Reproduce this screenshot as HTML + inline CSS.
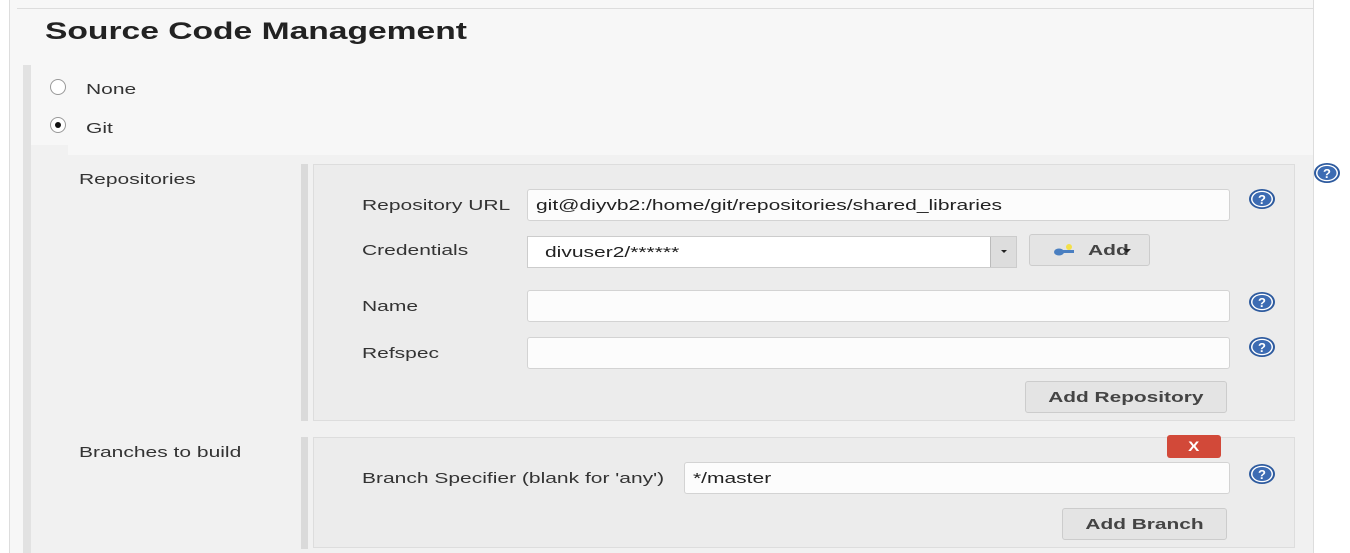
<!DOCTYPE html>
<html><head><style>
*{margin:0;padding:0;box-sizing:border-box}
body{width:1350px;height:553px;overflow:hidden;background:#fff;font-family:"Liberation Sans",sans-serif;font-size:15px;color:#333;position:relative}
.a{position:absolute}
.s{display:inline-block;transform:scaleX(1.4);transform-origin:left center;white-space:nowrap}
.c{display:inline-block;transform:scaleX(1.39);transform-origin:center;white-space:nowrap}
.inp{position:absolute;background:#fcfcfc;border:1px solid #d3d3d3;border-radius:3px;height:32px;padding:0 8px;line-height:31px;color:#222}
.btn{position:absolute;background:#e4e4e4;border:1px solid #ccc;border-radius:3px;font-weight:bold;color:#444;text-align:center;line-height:31px;height:32px}
.lbl{position:absolute;color:#333}
</style></head><body>
<div class="a" style="left:9px;top:0;width:1305px;height:553px;background:#f7f7f7;border-left:1px solid #ddd;border-right:1px solid #ddd"></div>
<div class="a" style="left:17px;top:8px;width:1296px;height:1px;background:#ddd"></div>
<div class="a" style="left:45px;top:18px;font-size:24px;font-weight:bold;color:#222"><span class="s" style="transform:scaleX(1.4)">Source Code Management</span></div>
<div class="a" style="left:23px;top:65px;width:8px;height:488px;background:#e2e2e2"></div>
<div class="a" style="left:31px;top:145px;width:37px;height:408px;background:#f1f1f1"></div>
<div class="a" style="left:68px;top:155px;width:1245px;height:398px;background:#f1f1f1"></div>
<div class="a" style="left:50px;top:79px;width:16px;height:16px;border:1px solid #999;border-radius:50%;background:#fff"></div>
<div class="lbl" style="left:86px;top:81px"><span class="s">None</span></div>
<div class="a" style="left:50px;top:117px;width:16px;height:16px;border:1px solid #999;border-radius:50%;background:#fff"><div style="margin:4px auto;width:6px;height:6px;border-radius:50%;background:#111"></div></div>
<div class="lbl" style="left:86px;top:120px"><span class="s">Git</span></div>
<div class="lbl" style="left:79px;top:171px"><span class="s">Repositories</span></div>
<div class="lbl" style="left:79px;top:444px"><span class="s">Branches to build</span></div>
<div class="a" style="left:301px;top:164px;width:7px;height:257px;background:#dadada"></div>
<div class="a" style="left:313px;top:164px;width:982px;height:257px;background:#ececec;border:1px solid #ddd"></div>
<div class="a" style="left:301px;top:437px;width:7px;height:112px;background:#dadada"></div>
<div class="a" style="left:313px;top:437px;width:982px;height:111px;background:#ececec;border:1px solid #ddd"></div>
<div class="lbl" style="left:362px;top:197px"><span class="s">Repository URL</span></div>
<div class="inp" style="left:527px;top:189px;width:703px"><span class="s">git@diyvb2:/home/git/repositories/shared_libraries</span></div>
<div class="lbl" style="left:362px;top:242px"><span class="s">Credentials</span></div>
<div class="inp" style="left:527px;top:236px;width:490px;padding-left:17px;background:#fff;border-radius:0;border-color:#ccc"><span class="s">divuser2/******</span></div>
<div class="a" style="left:990px;top:237px;width:26px;height:30px;background:#ddd;border-left:1px solid #bbb"><div style="margin:13px auto;width:0;height:0;border-left:3px solid transparent;border-right:3px solid transparent;border-top:3px solid #222"></div></div>
<div class="btn" style="left:1029px;top:234px;width:121px;text-align:left;padding-left:58px"><span class="s">Add</span></div>
<svg class="a" style="left:1053px;top:243px" width="30" height="14"><ellipse cx="6" cy="9" rx="5" ry="3.5" fill="#4a7fc1"/><rect x="9" y="7" width="12" height="3" fill="#4a7fc1"/><circle cx="16" cy="4" r="3" fill="#f3e04a"/></svg>
<div class="a" style="left:1123px;top:249px;width:0;height:0;border-left:4px solid transparent;border-right:4px solid transparent;border-top:4px solid #222"></div>
<div class="lbl" style="left:362px;top:298px"><span class="s">Name</span></div>
<div class="inp" style="left:527px;top:290px;width:703px"></div>
<div class="lbl" style="left:362px;top:345px"><span class="s">Refspec</span></div>
<div class="inp" style="left:527px;top:337px;width:703px"></div>
<div class="btn" style="left:1025px;top:381px;width:202px"><span class="c">Add Repository</span></div>
<div class="a" style="left:1167px;top:435px;width:54px;height:23px;background:#d24939;border-radius:3px;color:#fff;font-weight:bold;text-align:center;line-height:23px;font-size:14px"><span class="c" style="transform:scaleX(1.2)">X</span></div>
<div class="lbl" style="left:362px;top:470px"><span class="s">Branch Specifier (blank for 'any')</span></div>
<div class="inp" style="left:684px;top:462px;width:546px"><span class="s">*/master</span></div>
<div class="btn" style="left:1062px;top:508px;width:165px"><span class="c">Add Branch</span></div>
<svg width="0" height="0" style="position:absolute"><defs><g id="h"><ellipse cx="14" cy="11" rx="13" ry="10" fill="#2d5a9e"/><ellipse cx="14" cy="11" rx="11" ry="8.3" fill="#fff"/><ellipse cx="14" cy="11" rx="9.5" ry="7" fill="#3d6cb3"/><text x="14" y="16" font-family="Liberation Sans" font-weight="bold" font-size="13" fill="#fff" text-anchor="middle">?</text></g></defs></svg>
<svg class="a" style="left:1248px;top:188px" width="28" height="22"><use href="#h"/></svg>
<svg class="a" style="left:1248px;top:291px" width="28" height="22"><use href="#h"/></svg>
<svg class="a" style="left:1248px;top:336px" width="28" height="22"><use href="#h"/></svg>
<svg class="a" style="left:1248px;top:463px" width="28" height="22"><use href="#h"/></svg>
<svg class="a" style="left:1313px;top:162px" width="28" height="22"><use href="#h"/></svg>
</body></html>
